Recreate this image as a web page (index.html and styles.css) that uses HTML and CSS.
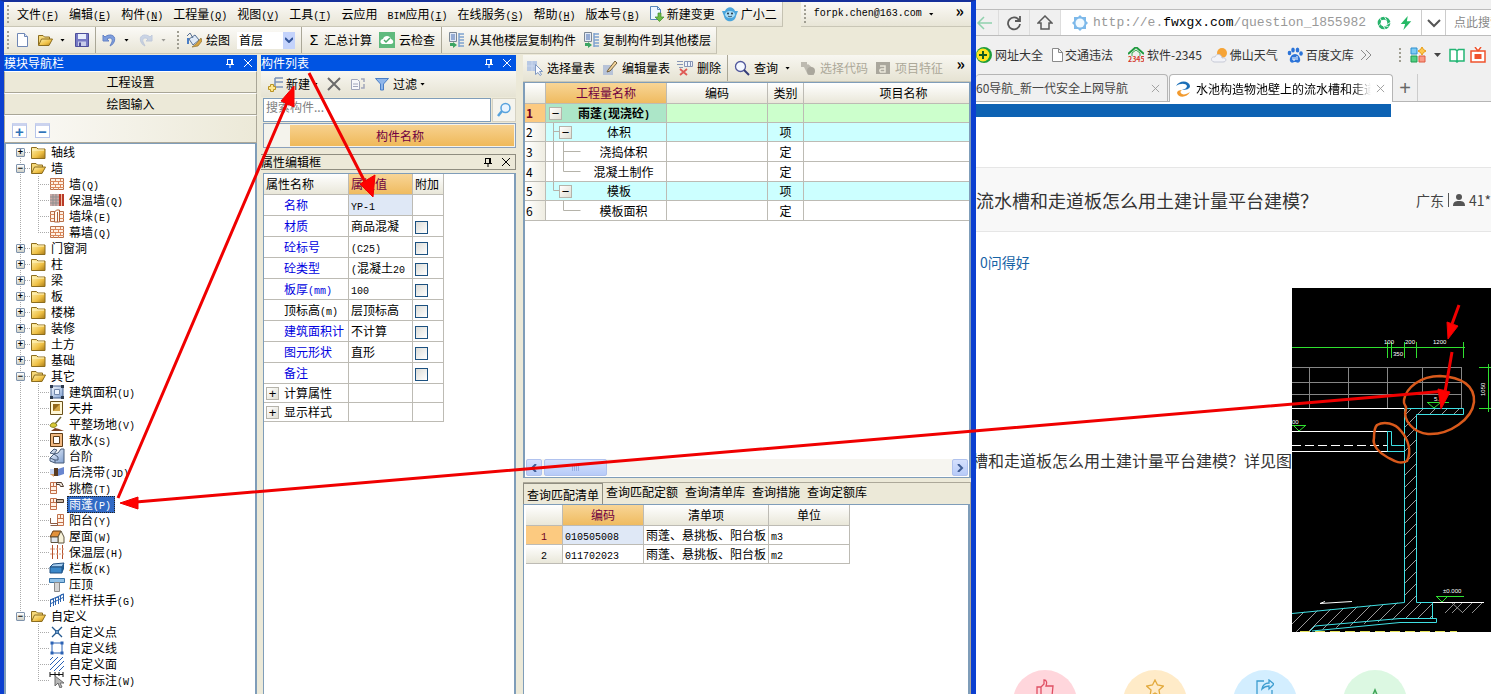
FILE: index.html
```html
<!DOCTYPE html>
<html lang="zh-CN">
<head>
<meta charset="utf-8">
<title>土建计量平台</title>
<link rel="stylesheet" href="styles.css">
</head>
<body>
<svg class="defs" aria-hidden="true">
  <defs>
    <linearGradient id="gold" x1="0" y1="0" x2="1" y2="1"><stop offset="0" stop-color="#fff3b0"/><stop offset=".6" stop-color="#efc044"/><stop offset="1" stop-color="#a87a18"/></linearGradient>
    <linearGradient id="steel" x1="0" y1="0" x2="1" y2="1"><stop offset="0" stop-color="#f4f9ff"/><stop offset="1" stop-color="#7f9fd0"/></linearGradient>
    <pattern id="hatch" width="12" height="12" patternUnits="userSpaceOnUse"><path d="M0 12L12 0" stroke="#9a9a9a" stroke-width="1"/></pattern>
    <pattern id="lattice" width="5" height="5" patternUnits="userSpaceOnUse"><path d="M0 5L5 0" stroke="#2b62b5" stroke-width="1"/></pattern>
  </defs>
  <symbol id="i-folder" viewBox="0 0 16 16"><path d="M1.500 3.500h5l1.500 1.500h7v9.500h-13.500z" fill="url(#gold)" stroke="#8c6d1f"/><path d="M2 6h12" stroke="#fff6c8"/></symbol>
  <symbol id="i-open" viewBox="0 0 16 16"><path d="M1.500 13V3.500h4.500l1.500 1.500h5v2" fill="#f6d97a" stroke="#8c6d1f"/><path d="M1.500 13.500l3-6.500h11l-3.500 6.500z" fill="url(#gold)" stroke="#8c6d1f"/></symbol>
  <symbol id="i-wall" viewBox="0 0 16 16"><path d="M1.500 2.500h13v11h-13z" fill="#fff1e4" stroke="#b8704a"/><path d="M1 5.500h14M1 8.500h14M1 11.500h14M6.500 3v2M11.500 3v2M4.500 6v2M9.500 6v2M6.500 9v2M11.500 9v2M4.500 12v2M9.500 12v2" stroke="#d9885c" fill="none"/></symbol>
  <symbol id="i-insul" viewBox="0 0 16 16"><path d="M1 2h9v12H1z" fill="#c9aaa8"/><path d="M1 5h9M1 8h9M1 11h9M4 2v12M7 2v12" stroke="#8f8f8f"/><path d="M10 2h5v12h-5z" fill="#b93a28"/><path d="M12.500 2v12" stroke="#f2c3a8"/></symbol>
  <symbol id="i-pier" viewBox="0 0 16 16"><path d="M1.500 3.500h13v10h-13z" fill="#fff1e4" stroke="#b8704a"/><path d="M1 6.500h14M1 10.500h14" stroke="#d9885c"/><path d="M5.500 14V4l2-2h3v12zM8.500 4v10" fill="#fffaf2" stroke="#b0623a"/></symbol>
  <symbol id="i-area" viewBox="0 0 16 16"><path d="M2 2h12v12H2z" fill="url(#steel)" stroke="#44618d"/><path d="M5.500 5.500h5v5h-5z" fill="#eef5ff" stroke="#7187aa"/><path d="M1 1h3v3H1zM12 1h3v3h-3zM1 12h3v3H1zM12 12h3v3h-3z" fill="#2d3a4d"/></symbol>
  <symbol id="i-court" viewBox="0 0 16 16"><path d="M1.500 1.500h12v13h-12z" fill="#fff7d6" stroke="#69501a"/><path d="M4 4h7v7H4z" fill="#94691b"/><path d="M4 11l7-7v7z" fill="#d2a646"/></symbol>
  <symbol id="i-level" viewBox="0 0 16 16"><path d="M12 1L6 8" stroke="#6f6a38" stroke-width="1.500"/><path d="M1 10c1-4 5-4 7-1-1 3-5 3-7 1z" fill="#d8c936" stroke="#89801d"/><path d="M2 15l4-3 4 1 5 2z" fill="#7a4020"/></symbol>
  <symbol id="i-apron" viewBox="0 0 16 16"><path d="M1.500 1.500h12v13h-12z" fill="#f0b881" stroke="#5f3d18"/><path d="M4.500 4.500h6v7h-6z" fill="#fff" stroke="#5f3d18"/></symbol>
  <symbol id="i-step" viewBox="0 0 16 16"><path d="M1 10l4-4 4-1 3-4h3v14H6l-5-2z" fill="url(#steel)" stroke="#465b78"/><path d="M1 10l5 2v3M5 6l4 3v3H6" stroke="#465b78" fill="none"/><path d="M1 5l4-4 3 1-3 4z" fill="#c6d3e5" stroke="#465b78"/></symbol>
  <symbol id="i-band" viewBox="0 0 16 16"><path d="M1 5h4v6H1z" fill="#c9d6f2"/><path d="M5 4h4v8H5z" fill="#583a20"/><path d="M9 5l6-2v7l-6 2z" fill="#6986cf"/><path d="M1 10h4v3z" fill="#d6a06b"/></symbol>
  <symbol id="i-eave" viewBox="0 0 16 16"><path d="M1.500 2.500h6v11h-6zM1 6.500h6M1 10.500h6M4.500 3v4" fill="#fff1e4" stroke="#c2714b"/><path d="M7.500 2.500h5l2 4h-3l-1-2h-3z" fill="#ece3d9" stroke="#4d3a2d"/></symbol>
  <symbol id="i-canopy" viewBox="0 0 16 16"><path d="M1.500 2.500h6v11h-6zM1 6.500h6M1 10.500h6M4.500 3v4" fill="#fff1e4" stroke="#c2714b"/><path d="M7.500 3.500h7v3h-7z" fill="#c9b7a5" stroke="#4d3a2d"/></symbol>
  <symbol id="i-balcony" viewBox="0 0 16 16"><path d="M8.500 2.500h6v11h-6zM8 6.500h6M8 10.500h6M11.500 3v4" fill="#fff1e4" stroke="#c2714b"/><path d="M1.500 6v5.500h7v2h-7" fill="none" stroke="#8e5c44"/></symbol>
  <symbol id="i-roof" viewBox="0 0 16 16"><path d="M4 3h8L9 9H1z" fill="#e2913a" stroke="#683c12"/><path d="M9 9l3-6 3 6v6H9z" fill="#f7f2da" stroke="#5e543f"/><path d="M2 9h7v5.500H2z" fill="#dfe6ee" stroke="#5e543f"/></symbol>
  <symbol id="i-layer" viewBox="0 0 16 16"><path d="M3.500 1v14M8.500 1v14M13.500 1v14" stroke="#b6522e"/><path d="M1 5h14M1 10h14" stroke="#d99b79" stroke-dasharray="2 1"/></symbol>
  <symbol id="i-slab" viewBox="0 0 16 16"><path d="M1 7l3-3 11-1-2 4z" fill="#a7cef0" stroke="#1e4e80"/><path d="M1 7h12v6H1z" fill="#3b88c9" stroke="#1e4e80"/><path d="M13 7l2-4v6l-2 4z" fill="#1d588e"/></symbol>
  <symbol id="i-coping" viewBox="0 0 16 16"><path d="M.500 2.500h15v4H.500z" fill="#8fc1e8" stroke="#3a75a8"/><path d="M5.500 6.500h5v9h-5z" fill="#d4d4d4" stroke="#8a8a8a"/></symbol>
  <symbol id="i-rail" viewBox="0 0 16 16"><path d="M1.500 15V8l3-1v7M6.500 13V6l3-1v7M11.500 10V3l3-1v7M1 12l14-7M1 8l14-6" fill="none" stroke="#2a63b0"/></symbol>
  <symbol id="i-point" viewBox="0 0 16 16"><path d="M3 3l4 4M13 3L9 7M3 13l4-4M13 13L9 9" fill="none" stroke="#24598f" stroke-width="1.300"/><circle cx="8" cy="8" r="1.500" fill="#8ab8e6" stroke="#24598f"/></symbol>
  <symbol id="i-line" viewBox="0 0 16 16"><path d="M3 3h10v10H3z" fill="#fff" stroke="#2b62b5"/><path d="M1.500 1.500h3v3h-3zM11.500 1.500h3v3h-3zM1.500 11.500h3v3h-3zM11.500 11.500h3v3h-3z" fill="#2b62b5"/></symbol>
  <symbol id="i-face" viewBox="0 0 16 16"><path d="M1 1h14v14H1z" fill="url(#lattice)"/></symbol>
  <symbol id="i-dim" viewBox="0 0 16 16"><path d="M1 0v5M14 0v5M1 2.500h13M6 0v4M10 0v4" stroke="#111" fill="none"/><path d="M6 4v10l3-3 2 5 2-1-2-4h4z" fill="#b8b8b8" stroke="#6c6c6c"/></symbol>
  <symbol id="i-new" viewBox="0 0 16 16"><path d="M2.500 1.500h7l3 3v10h-10z" fill="#fff" stroke="#6f87b5"/><path d="M9.500 1.500v3h3" fill="#dbe6f8" stroke="#6f87b5"/></symbol>
  <symbol id="i-save" viewBox="0 0 16 16"><path d="M1.500 1.500h13v13h-13z" fill="#7679c4" stroke="#4d4f9b"/><path d="M4 2h8v5H4z" fill="#e8eefb"/><path d="M4 9.500h8V14H4z" fill="#c9cdea"/><path d="M5 10.500h2V14H5z" fill="#4d4f9b"/></symbol>
  <symbol id="i-undo" viewBox="0 0 16 16"><path d="M2 3v6h6L6 7c3-2 6-1 5 3l-2 4c5-2 7-10 1-11-2 0-4 0-6 2z" fill="#7e9ede" stroke="#6482c4"/></symbol>
  <symbol id="i-paint" viewBox="0 0 16 16"><path d="M3 7l6-4 4 5-6 5z" fill="#dfeaf7" stroke="#566f93"/><path d="M1 4l3-3 3 5" fill="none" stroke="#566f93"/><path d="M2 6v6" stroke="#4b7fc6" stroke-width="2"/><path d="M15 6l-5 6-4 3 6-1 4-5z" fill="#d8a33e" stroke="#8f7437" stroke-width=".7"/></symbol>
  <symbol id="i-check" viewBox="0 0 16 16"><rect width="16" height="16" fill="#5fba7d"/><path d="M3 12c-3-2-1-5 1-5 1-4 7-4 8 0 3 1 3 5 0 5z" fill="#fff"/><path d="M5 8l2 2 4-4" fill="none" stroke="#4cab6b" stroke-width="1.500"/></symbol>
  <symbol id="i-copy" viewBox="0 0 16 16"><path d="M1.500 .500h7v9h-7z" fill="#e2eaf6" stroke="#7b8795"/><path d="M3 3h4M3 5h4M3 7h4" stroke="#4b6fb0"/><path d="M11 2h5M11 5h5M11 8h5M11 11h5M11 14h5M11 1v14" stroke="#7fa3d0" stroke-width="1.500"/><path d="M2 11v3h3v2l4-3-4-3v1z" fill="#3ba562"/></symbol>
  <symbol id="i-change" viewBox="0 0 16 16"><path d="M2.500 .500h7l3 3v10h-10z" fill="#edf6ff" stroke="#5887bb"/><path d="M9.500 .500v3h3" fill="none" stroke="#5887bb"/><path d="M10 7v4h-3l4.500 4.500L16 11h-3V7z" fill="#6cbb46" stroke="#3d8d2a" stroke-width=".7"/></symbol>
  <symbol id="i-mascot" viewBox="0 0 16 16"><path d="M0 5l3 0c2-5 8-5 10 0l3 0-2 5c-1 7-11 7-12 0z" fill="#4aa5dc"/><ellipse cx="8" cy="8.500" rx="5" ry="3.500" fill="#a8dcf5"/><circle cx="6" cy="7.500" r="1" fill="#234"/><circle cx="10" cy="7.500" r="1" fill="#234"/><path d="M6 10c1 1 3 1 4 0" fill="none" stroke="#234" stroke-width=".8"/></symbol>
  <symbol id="i-add" viewBox="0 0 16 16"><path d="M8 2h8M8 6h8M8 11h8M8 2v9" stroke="#7b93b8" stroke-width="1.500" fill="none"/><path d="M3.500 8.500h3v2h2v3h-2v2h-3v-2h-2v-3h2z" fill="#ffe78d" stroke="#b99224"/></symbol>
  <symbol id="i-del" viewBox="0 0 16 16"><path d="M2 2l12 12M14 2L2 14" stroke="#6b6b6b" stroke-width="2"/></symbol>
  <symbol id="i-dup" viewBox="0 0 16 16"><path d="M1.500 3.500h6l2 2v8h-8zM3 8h5M3 10.500h5" fill="#f8f8fb" stroke="#a1a6bb"/><path d="M11 3h3v3M14 8v4h-3" fill="none" stroke="#a1a6bb" stroke-width="1.500"/></symbol>
  <symbol id="i-funnel" viewBox="0 0 16 16"><path d="M1.500 2.500h13l-5 5.500v6h-3V8z" fill="#8fb6ea" stroke="#4a7fc6"/></symbol>
  <symbol id="i-glass" viewBox="0 0 16 16"><circle cx="6.500" cy="6.500" r="5" fill="#f4f8ff" stroke="#51589c" stroke-width="1.300"/><path d="M10 10l5 5" stroke="#333b78" stroke-width="2"/></symbol>
  <symbol id="i-find" viewBox="0 0 16 16"><circle cx="9.500" cy="6" r="4.500" fill="#e9f4ff" stroke="#57a2dd" stroke-width="1.500"/><path d="M6 9l-4 5" stroke="#57a2dd" stroke-width="2.500"/></symbol>
  <symbol id="i-pick" viewBox="0 0 16 16"><path d="M0 1h10v10H0z" fill="#b7c8e4"/><path d="M0 6h10M5 1v10" stroke="#cbd8ee"/><path d="M8.500 4.500v10l2.500-2 2 3 1.500-1-2-3h3z" fill="#f9fbff" stroke="#7f98c2"/></symbol>
  <symbol id="i-edit" viewBox="0 0 16 16"><path d="M1 5h10v10H1z" fill="#b7c3d8"/><path d="M6 10l7-9 2 2-7 8-3 1z" fill="#f3d49a" stroke="#72603e"/></symbol>
  <symbol id="i-rowdel" viewBox="0 0 16 16"><path d="M0 1.500h6M0 4.500h6M2 7.500h4" stroke="#8795b5"/><path d="M7.500 1.500h8v5h-8zM10.500 2v5M13.500 2v5" fill="#eef3fb" stroke="#8795b5"/><path d="M3 9l7 6M10 9l-7 6" stroke="#df5a55" stroke-width="1.800"/></symbol>
  <symbol id="i-code" viewBox="0 0 16 16"><path d="M1 2h6v5H1zM4 7l4-3 6 5v6H8z" fill="#bdbab0"/><circle cx="11" cy="11" r="4" fill="#aaa79d"/></symbol>
  <symbol id="i-feature" viewBox="0 0 16 16"><path d="M1 2h14v12H1z" fill="#aaa79d"/><path d="M5 6h5v6H5.500c-1-1-1-3 1-3H10" fill="none" stroke="#ece9dc" stroke-width="1.500"/></symbol>
  <symbol id="i-pin" viewBox="0 0 10 10"><path d="M2.500 1v5M7.500 1v5M2.500 1.500h5M6.500 1v5M1 6.500h8M5 7v3" fill="none" stroke="currentColor"/></symbol>
  <symbol id="i-x" viewBox="0 0 10 10"><path d="M1 1l8 8M9 1L1 9" stroke="currentColor" fill="none"/></symbol>
</svg>

<div class="desktop">
<main class="app">
  <div class="bar menubar">
    <nav class="strip">
      <i class="grip"></i>
      <button>文件<span class="k">(<u>F</u>)</span></button>
      <button>编辑<span class="k">(<u>E</u>)</span></button>
      <button>构件<span class="k">(<u>N</u>)</span></button>
      <button>工程量<span class="k">(<u>Q</u>)</span></button>
      <button>视图<span class="k">(<u>V</u>)</span></button>
      <button>工具<span class="k">(<u>T</u>)</span></button>
      <button>云应用</button>
      <button><span class="k">BIM</span>应用<span class="k">(<u>I</u>)</span></button>
      <button>在线服务<span class="k">(<u>S</u>)</span></button>
      <button>帮助<span class="k">(<u>H</u>)</span></button>
      <button>版本号<span class="k">(<u>B</u>)</span></button>
      <span class="extras">
        <button class="tool"><svg><use href="#i-change"/></svg>新建变更</button>
        <button class="tool"><svg><use href="#i-mascot"/></svg>广小二</button>
      </span>
    </nav>
    <div class="strip account">
      <i class="grip"></i>
      <button class="tool"><span class="k">forpk.chen@163.com</span><i class="caret"></i></button>
      <button class="more">»</button>
    </div>
  </div>
  <div class="bar toolbar">
    <div class="strip">
      <i class="grip"></i>
      <button class="tool" aria-label="新建"><svg><use href="#i-new"/></svg></button>
      <button class="tool" aria-label="打开"><svg><use href="#i-open"/></svg><i class="caret"></i></button>
      <button class="tool" aria-label="保存"><svg><use href="#i-save"/></svg></button>
      <i class="sep"></i>
      <button class="tool" aria-label="撤销"><svg><use href="#i-undo"/></svg><i class="caret"></i></button>
      <button class="tool faded" aria-label="重做"><svg class="flip"><use href="#i-undo"/></svg><i class="caret"></i></button>
    </div>
    <div class="strip actions">
      <i class="grip"></i>
      <button class="tool"><svg><use href="#i-paint"/></svg>绘图</button>
      <select aria-label="楼层"><option>首层</option></select>
      <i class="sep"></i>
      <button class="tool"><b class="sigma">Σ</b>汇总计算</button>
      <button class="tool"><svg><use href="#i-check"/></svg>云检查</button>
      <i class="sep"></i>
      <button class="tool"><svg><use href="#i-copy"/></svg>从其他楼层复制构件</button>
      <button class="tool"><svg><use href="#i-copy"/></svg>复制构件到其他楼层</button>
    </div>
  </div>

  <div class="panels">
    <section class="nav-panel">
      <h2 class="title">模块导航栏<svg><use href="#i-pin"/></svg><svg><use href="#i-x"/></svg></h2>
      <button class="wide">工程设置</button>
      <button class="wide">绘图输入</button>
      <div class="fold"><button aria-label="展开">+</button><button aria-label="折叠">−</button></div>
      <div class="treebox">
        <ul class="tree">
          <li><p><button class="ex">+</button><i class="dots"></i><svg><use href="#i-folder"/></svg><span>轴线</span></p></li>
          <li><p><button class="ex">−</button><i class="dots"></i><svg><use href="#i-open"/></svg><span>墙</span></p>
            <ul>
              <li><svg><use href="#i-wall"/></svg><span>墙<span class="k">(Q)</span></span></li>
              <li><svg><use href="#i-insul"/></svg><span>保温墙<span class="k">(Q)</span></span></li>
              <li><svg><use href="#i-pier"/></svg><span>墙垛<span class="k">(E)</span></span></li>
              <li><svg><use href="#i-wall"/></svg><span>幕墙<span class="k">(Q)</span></span></li>
            </ul></li>
          <li><p><button class="ex">+</button><i class="dots"></i><svg><use href="#i-folder"/></svg><span>门窗洞</span></p></li>
          <li><p><button class="ex">+</button><i class="dots"></i><svg><use href="#i-folder"/></svg><span>柱</span></p></li>
          <li><p><button class="ex">+</button><i class="dots"></i><svg><use href="#i-folder"/></svg><span>梁</span></p></li>
          <li><p><button class="ex">+</button><i class="dots"></i><svg><use href="#i-folder"/></svg><span>板</span></p></li>
          <li><p><button class="ex">+</button><i class="dots"></i><svg><use href="#i-folder"/></svg><span>楼梯</span></p></li>
          <li><p><button class="ex">+</button><i class="dots"></i><svg><use href="#i-folder"/></svg><span>装修</span></p></li>
          <li><p><button class="ex">+</button><i class="dots"></i><svg><use href="#i-folder"/></svg><span>土方</span></p></li>
          <li><p><button class="ex">+</button><i class="dots"></i><svg><use href="#i-folder"/></svg><span>基础</span></p></li>
          <li><p><button class="ex">−</button><i class="dots"></i><svg><use href="#i-open"/></svg><span>其它</span></p>
            <ul>
              <li><svg><use href="#i-area"/></svg><span>建筑面积<span class="k">(U)</span></span></li>
              <li><svg><use href="#i-court"/></svg><span>天井</span></li>
              <li><svg><use href="#i-level"/></svg><span>平整场地<span class="k">(V)</span></span></li>
              <li><svg><use href="#i-apron"/></svg><span>散水<span class="k">(S)</span></span></li>
              <li><svg><use href="#i-step"/></svg><span>台阶</span></li>
              <li><svg><use href="#i-band"/></svg><span>后浇带<span class="k">(JD)</span></span></li>
              <li><svg><use href="#i-eave"/></svg><span>挑檐<span class="k">(T)</span></span></li>
              <li><svg><use href="#i-canopy"/></svg><span class="selected">雨蓬<span class="k">(P)</span></span></li>
              <li><svg><use href="#i-balcony"/></svg><span>阳台<span class="k">(Y)</span></span></li>
              <li><svg><use href="#i-roof"/></svg><span>屋面<span class="k">(W)</span></span></li>
              <li><svg><use href="#i-layer"/></svg><span>保温层<span class="k">(H)</span></span></li>
              <li><svg><use href="#i-slab"/></svg><span>栏板<span class="k">(K)</span></span></li>
              <li><svg><use href="#i-coping"/></svg><span>压顶</span></li>
              <li><svg><use href="#i-rail"/></svg><span>栏杆扶手<span class="k">(G)</span></span></li>
            </ul></li>
          <li><p><button class="ex">−</button><i class="dots"></i><svg><use href="#i-open"/></svg><span>自定义</span></p>
            <ul>
              <li><svg><use href="#i-point"/></svg><span>自定义点</span></li>
              <li><svg><use href="#i-line"/></svg><span>自定义线</span></li>
              <li><svg><use href="#i-face"/></svg><span>自定义面</span></li>
              <li><svg><use href="#i-dim"/></svg><span>尺寸标注<span class="k">(W)</span></span></li>
            </ul></li>
        </ul>
      </div>
    </section>

    <section class="part-panel">
      <h2 class="title">构件列表<svg><use href="#i-pin"/></svg><svg><use href="#i-x"/></svg></h2>
      <div class="parttools">
        <button class="tool"><svg><use href="#i-add"/></svg>新建<i class="caret"></i></button>
        <button class="tool" aria-label="删除构件"><svg><use href="#i-del"/></svg></button>
        <button class="tool" aria-label="复制"><svg><use href="#i-dup"/></svg></button>
        <button class="tool"><svg><use href="#i-funnel"/></svg>过滤<i class="caret"></i></button>
      </div>
      <div class="search"><input type="text" placeholder="搜索构件..." aria-label="搜索构件"><button aria-label="搜索"><svg><use href="#i-find"/></svg></button></div>
      <div class="partname"><span>构件名称</span></div>
      <h2 class="title plain">属性编辑框<svg><use href="#i-pin"/></svg><svg><use href="#i-x"/></svg></h2>
      <div class="propbox">
        <table class="props">
          <colgroup><col class="w85"><col class="w64"><col class="w31"></colgroup>
          <thead><tr><th>属性名称</th><th class="hot">属性值</th><th>附加</th></tr></thead>
          <tbody>
            <tr><td>名称</td><td class="cur"><span class="k">YP-1</span></td><td></td></tr>
            <tr><td>材质</td><td>商品混凝</td><td><input type="checkbox" aria-label="材质"></td></tr>
            <tr><td>砼标号</td><td><span class="k">(C25)</span></td><td><input type="checkbox" aria-label="砼标号"></td></tr>
            <tr><td>砼类型</td><td><span class="k">(</span>混凝土<span class="k">20</span></td><td><input type="checkbox" aria-label="砼类型"></td></tr>
            <tr><td>板厚<span class="k">(mm)</span></td><td><span class="k">100</span></td><td><input type="checkbox" aria-label="板厚"></td></tr>
            <tr class="private"><td>顶标高<span class="k">(m)</span></td><td>层顶标高</td><td><input type="checkbox" aria-label="顶标高"></td></tr>
            <tr><td>建筑面积计</td><td>不计算</td><td><input type="checkbox" aria-label="建筑面积计"></td></tr>
            <tr><td>图元形状</td><td>直形</td><td><input type="checkbox" aria-label="图元形状"></td></tr>
            <tr><td>备注</td><td></td><td><input type="checkbox" aria-label="备注"></td></tr>
            <tr class="more-props"><td><button class="box">+</button>计算属性</td><td></td><td></td></tr>
            <tr class="more-props"><td><button class="box">+</button>显示样式</td><td></td><td></td></tr>
          </tbody>
        </table>
      </div>
    </section>

    <section class="work-panel">
      <div class="worktools">
        <button class="tool"><svg><use href="#i-pick"/></svg>选择量表</button>
        <button class="tool"><svg><use href="#i-edit"/></svg>编辑量表</button>
        <button class="tool"><svg><use href="#i-rowdel"/></svg>删除</button>
        <i class="sep"></i>
        <button class="tool"><svg><use href="#i-glass"/></svg>查询<i class="caret"></i></button>
        <button class="tool" disabled><svg><use href="#i-code"/></svg>选择代码</button>
        <button class="tool" disabled><svg><use href="#i-feature"/></svg>项目特征</button>
        <button class="more">»</button>
      </div>
      <div class="gridbox">
        <div class="scroller">
          <table class="grid">
            <colgroup><col class="w21"><col class="w121"><col class="w101"><col class="w36"><col class="w200"></colgroup>
            <thead><tr><th></th><th class="hot">工程量名称</th><th>编码</th><th>类别</th><th>项目名称</th></tr></thead>
            <tbody>
              <tr class="top"><th>1</th><td><div class="cell"><button class="box">−</button><b>雨蓬<span class="k">(</span>现浇砼<span class="k">)</span></b></div></td><td></td><td></td><td></td></tr>
              <tr class="group"><th>2</th><td><div class="cell"><svg class="twig"><path d="M4.500 0v20M4.500 9.500h6"/></svg><button class="box">−</button><span>体积</span></div></td><td></td><td>项</td><td></td></tr>
              <tr class="leaf"><th>3</th><td><div class="cell"><svg class="twig long"><path d="M4.500 0v20M14.500 0v20M14.500 9.500h17"/></svg><span>浇捣体积</span></div></td><td></td><td>定</td><td></td></tr>
              <tr class="leaf"><th>4</th><td><div class="cell"><svg class="twig long"><path d="M4.500 0v20M14.500 0v9.500h17"/></svg><span>混凝土制作</span></div></td><td></td><td>定</td><td></td></tr>
              <tr class="group"><th>5</th><td><div class="cell"><svg class="twig"><path d="M4.500 0v9.500h6"/></svg><button class="box">−</button><span>模板</span></div></td><td></td><td>项</td><td></td></tr>
              <tr class="leaf"><th>6</th><td><div class="cell"><svg class="twig long"><path d="M14.500 0v9.500h17"/></svg><span>模板面积</span></div></td><td></td><td>定</td><td></td></tr>
            </tbody>
          </table>
        </div>
        <div class="hbar"><button aria-label="向左"><svg viewBox="0 0 8 8"><path d="M6 0L2 4l4 4"/></svg></button><i class="thumb"></i><button aria-label="向右"><svg viewBox="0 0 8 8"><path d="M2 0l4 4-4 4"/></svg></button></div>
      </div>
      <div class="querybox">
        <div class="tabs"><button class="on">查询匹配清单</button><button>查询匹配定额</button><button>查询清单库</button><button>查询措施</button><button>查询定额库</button></div>
        <div class="results">
          <table class="list">
            <colgroup><col class="w37"><col class="w81"><col class="w125"><col class="w81"></colgroup>
            <thead><tr><th></th><th class="hot">编码</th><th>清单项</th><th>单位</th></tr></thead>
            <tbody>
              <tr><th class="on"><span class="k">1</span></th><td class="cur"><span class="k">010505008</span></td><td>雨蓬、悬挑板、阳台板</td><td><span class="k">m3</span></td></tr>
              <tr><th><span class="k">2</span></th><td><span class="k">011702023</span></td><td>雨蓬、悬挑板、阳台板</td><td><span class="k">m2</span></td></tr>
            </tbody>
          </table>
        </div>
      </div>
    </section>
  </div>
</main>

<section class="browser">
  <div class="address">
    <button aria-label="后退"><svg viewBox="0 0 16 16"><path d="M16 8H2M8 2L2 8l6 6" fill="none" stroke="#8fd1ad" stroke-width="1.500"/></svg></button>
    <button aria-label="刷新"><svg viewBox="0 0 16 16"><path d="M13 5A6 6 0 1 0 14 9M14 1v5H9" fill="none" stroke="#5a5a5a" stroke-width="1.800"/></svg></button>
    <button aria-label="主页"><svg viewBox="0 0 16 16"><path d="M1 8l7-7 7 7h-3v6H4V8z" fill="none" stroke="#5a5a5a" stroke-width="1.500"/></svg></button>
    <div class="url">
      <svg viewBox="0 0 16 16"><path d="M8 0l2 2 4 0 0 4 2 2-2 2 0 4-4 0-2 2-2-2-4 0 0-4-2-2 2-2 0-4 4 0z" fill="#7db9ea"/><circle cx="8" cy="8" r="4.500" fill="#f2faff"/></svg>
      <span>http://e.<b>fwxgx.com</b>/question_1855982</span>
      <svg viewBox="0 0 16 16" class="s14"><circle cx="8" cy="8" r="5.500" fill="none" stroke="#27b36b" stroke-width="3.500"/><path d="M8 0l3 5M16 7l-5 3M10 16l-3-5M1 12l4-4M3 2l3 5M13 12l-6-1" stroke="#fff" stroke-width="1"/></svg>
      <svg viewBox="0 0 16 16" class="s14"><path d="M10 0L2 9h5l-2 7 9-10H9z" fill="#25b965"/></svg>
    </div>
    <button class="drop" aria-label="展开"><svg viewBox="0 0 16 16"><path d="M2 5l6 6 6-6" fill="none" stroke="#555" stroke-width="2"/></svg></button>
    <span class="hint">点此搜索</span>
  </div>
  <div class="marks">
    <a href="#"><svg viewBox="0 0 16 16"><circle cx="8" cy="8" r="8" fill="#1d9c3a"/><circle cx="7" cy="8" r="6.500" fill="#ffe51f"/><path d="M7 4v8M3 8h8" stroke="#145c22" stroke-width="2"/></svg>网址大全</a>
    <a href="#" class="doc"><svg viewBox="0 0 16 16"><path d="M3.500 1.500h6l4 4v9h-10zM9.500 1.500v4h4" fill="#fff" stroke="#8a8a8a"/></svg>交通违法</a>
    <a href="#"><svg viewBox="0 0 16 16"><path d="M0 7l8-7 8 7" fill="none" stroke="#209a3f" stroke-width="2"/><path d="M4 9V6l4-3 4 3v3" fill="none" stroke="#36a852"/><text x="0" y="15" font-size="7" font-weight="bold" fill="#d3392f">2345</text></svg>软件-2345</a>
    <a href="#"><svg viewBox="0 0 16 16"><circle cx="11" cy="6" r="5" fill="#f6a436"/><path d="M3 15c-4-1-3-6 1-5 1-4 7-3 7 1 5-1 5 4 1 4z" fill="#f2f3f8" stroke="#c6c9d6"/></svg>佛山天气</a>
    <a href="#"><svg viewBox="0 0 16 16"><path d="M8 7c3 0 6 4 5 7-1 3-4 1-5 1s-4 2-5-1c-1-3 2-7 5-7z" fill="#2c74d8"/><ellipse cx="2.500" cy="6" rx="1.800" ry="2.200" fill="#2c74d8"/><ellipse cx="6" cy="3" rx="1.800" ry="2.500" fill="#2c74d8"/><ellipse cx="10.500" cy="3" rx="1.800" ry="2.500" fill="#2c74d8"/><ellipse cx="14" cy="6.500" rx="1.800" ry="2.200" fill="#2c74d8"/><path d="M6 10v3h2v-3M10 9v4" stroke="#fff" fill="none"/></svg>百度文库</a>
    <button class="chev" aria-label="更多书签"><svg viewBox="0 0 12 12"><path d="M1 1l5 5-5 5M6 1l5 5-5 5" fill="none" stroke="#8a8a8a"/></svg></button>
    <div class="plugins"><i class="grip"></i>
      <svg viewBox="0 0 16 16"><path d="M1 1h6v6H1z" fill="#7ccaf5" stroke="#2c8fcf"/><path d="M1 9h6v6H1z" fill="#52cf83" stroke="#1f9c50"/><path d="M9 9h6v6H9z" fill="#fb9a85" stroke="#dd5a40"/><path d="M12 0l1.500 2.500L16 4l-2.500 1.500L12 8l-1.500-2.500L8 4l2.500-1.500z" fill="#ffc64b" stroke="#e79b13"/></svg>
      <i class="caret"></i>
      <svg viewBox="0 0 16 16"><path d="M1 2.500h5.500L8 4l1.500-1.500H15V14H9.500L8 15l-1.500-1H1zM8 4v11" fill="#fff" stroke="#22b573" stroke-width="1.500"/></svg>
      <svg viewBox="0 0 16 16"><path d="M1 4h14v11H1zM5 0l3 4 3-4" fill="#fff" stroke="#f0532d" stroke-width="1.500"/><path d="M4.500 7h7v5h-7z" fill="#f0532d"/></svg>
    </div>
  </div>
  <div class="pagetabs">
    <div class="ptab first"><span>60导航_新一代安全上网导航</span><svg><use href="#i-x"/></svg></div>
    <div class="ptab active"><svg class="s16" viewBox="0 0 16 16"><path d="M1 5C4-1 14-1 15 5c0 3-4 4-8 4 3-1 5-2 5-4-1-3-7-3-11 0z" fill="#1b6fb8"/><path d="M15 11c-3 6-12 6-13 1 0-2 2-3 5-3-2 1-2 3 0 4 2 1 5 0 8-2z" fill="#f29a2e"/></svg><span>水池构造物池壁上的流水槽和走道</span><svg><use href="#i-x"/></svg></div>
    <button class="plus" aria-label="新标签页">+</button>
  </div>
  <div class="page">
    <div class="band"></div>
    <header class="question"><h1>流水槽和走道板怎么用土建计量平台建模？</h1><p>广东<i></i><svg viewBox="0 0 12 12"><circle cx="6" cy="3" r="3" fill="#555"/><path d="M0 12c0-4 2-5 6-5s6 1 6 5z" fill="#555"/></svg>41*</p></header>
    <a class="good" href="#">0问得好</a>
    <div class="detail">
      <p>槽和走道板怎么用土建计量平台建模？详见图</p>
      <svg class="drawing" viewBox="0 0 199 344" role="img" aria-label="剖面图">
        <rect width="199" height="344"/>
        <g class="crisp" fill="none" stroke-width="1">
          <path d="M0 79.500h170M0 94.500h170M0 106.500h170M17.500 79v41M56.500 79v41M95.500 79v41M130.500 79v41M169.500 79v41" stroke="#868686"/>
          <path d="M0 59.500h173M95.500 54v16M99.500 54v16M112.500 54v16M124.500 54v16M171.500 54v16M187 79.500h12M196.500 76v48M187 120.500h12" stroke="#2fe02f"/>
          <path d="M0 120.500h112M0 143.500h95M0 163.500h112M140 314.500h52" stroke="#fff"/>
          <path d="M0 157.500h95" stroke="#fff" stroke-dasharray="9 4"/>
          <path d="M8 343.500h157" stroke="#e5e35a" stroke-dasharray="10 5"/>
        </g>
        <g fill="none" stroke-width="1">
          <path d="M28 315.500l5-2M28 315.500l32-2" stroke="#fff"/>
          <path d="M112 120h59v6h-47v188h16v17h-32L20 343 0 344V325l112-11z" fill="url(#hatch)"/>
          <path d="M0 325.500l112.500-11V120.500h59v6h-47v188h16v16M18 343l5-5 85-7.500h36.500v4H108L20 343M95.500 143v20M95.500 143.500h4v14h13M95.500 163.500h17" stroke="#3fe0e4"/>
          <path d="M135 114.500h22M136 115l6 5 6-5M0 137.500h14M2 138l5 5 6-5M144 308.500h28M145 309l5 5 5-5" stroke="#2fe02f"/>
          <path d="M153 325l10-10M160 325l10-10M170 325l10-10M180 325l10-10M160 315l10 9" stroke="#8f8f8f"/>
          <path d="M112 112c2-12 16-24 36-24 22 1 35 10 34 26-2 17-24 33-46 32-14-1-26-14-22-25 1-4-3-3-2-9z" stroke="#d8591b" stroke-width="2.500"/>
          <path d="M85 137c7-4 18-2 24 6 7 8 11 20 6 30-8 4-14-1-20-4-8-4-15-12-13-19 0-6 1-11 3-13z" stroke="#d8591b" stroke-width="2.500"/>
        </g>
        <g class="dims"><text x="92" y="56">100</text><text x="113" y="56">200</text><text x="141" y="56">1200</text><text x="101" y="68">350</text><text x="142" y="113">5.1</text><text x="151" y="305">±0.000</text><text x="0" y="136">00</text><text transform="translate(193 108) rotate(-90)">1050</text></g>
      </svg>
    </div>
    <div class="share">
      <button class="c-red" aria-label="点赞"><svg viewBox="0 0 18 18"><path d="M1 8h4v9H1zM5 8l3-3V1c3 0 3 3 2 6h7l-1 10H5" fill="none" stroke="#e04f63" stroke-width="1.300"/></svg></button>
      <button class="c-gold" aria-label="收藏"><svg viewBox="0 0 18 18"><path d="M9 1l2.500 5 6 1-4.500 4 1 6-5-3-5 3 1-6L.500 7l6-1z" fill="none" stroke="#e2a93c" stroke-width="1.300"/></svg></button>
      <button class="c-blue" aria-label="分享"><svg viewBox="0 0 18 18"><path d="M8 2H1v15h15v-6M6 10c1-5 4-6 7-6V1l5 4-5 5V7c-3 0-5 1-7 3z" fill="none" stroke="#3d9dd0" stroke-width="1.300"/></svg></button>
      <button class="c-green" aria-label="置顶"><svg viewBox="0 0 18 18"><path d="M6 18l3-7 3 7" fill="none" stroke="#3fa557" stroke-width="1.500"/></svg></button>
    </div>
  </div>
</section>

<svg class="marker" viewBox="0 0 1491 694" preserveAspectRatio="none" aria-hidden="true">
  <path d="M118 498L289 98M309 73L367 186M1446 391L136 502M1459 305L1452 324M1452 352L1445 392"/>
  <path class="head" d="M294 86L281 101l13 6zM373 197l-13-13 15-9zM120 503l18-6v12zM1448 339l-1-17 11 4zM1441 409l-3-20 12 3z"/>
</svg>
</div>
</body>
</html>
```

FILE: styles.css
```css
* { box-sizing: border-box; }
html, body { height: 100%; }
body, h1, h2, p, ul { margin: 0; padding: 0; }
ul { list-style: none; }
body {
  overflow: hidden;
  font: 12px/16px "Noto Sans CJK SC", sans-serif;
  color: #000;
}
button {
  padding: 0;
  border: 0;
  background: none;
  color: inherit;
  font: inherit;
  white-space: nowrap;
}
svg { flex: none; width: 16px; height: 16px; }
.defs { position: absolute; width: 0; height: 0; }
.k { font: 10px/12px "Liberation Mono", monospace; }
.desktop {
  position: relative;
  display: grid;
  grid-template-columns: 976fr 515fr;
  height: 100vh;
}

/* Application window */
.app {
  display: flex;
  flex-direction: column;
  min-width: 0;
  min-height: 0;
  overflow: hidden;
  border: solid #0b3fd0;
  border-width: 2px 5px 0 4px;
  border-top-color: #16309a;
  background: #ece9d8;
}
.bar { display: flex; flex: none; }
.menubar { height: 25px; }
.toolbar { height: 27px; }
.strip {
  display: flex;
  align-items: center;
  gap: 10px;
  padding: 0 5px 0 3px;
  border-right: 1px solid #c5c2b2;
  border-bottom: 1px solid #c9c6b6;
  background: linear-gradient(#fbfaf7, #e8e5d6);
}
.extras { display: flex; gap: 7px; margin-left: -2px; }
.menubar .extras .tool { gap: 3px; }
.account { flex: 1; margin-left: 18px; border-right: 0; }
.grip {
  width: 2px;
  height: 18px;
  margin-right: -2px;
  background: repeating-linear-gradient(#a09e92 0 2px, transparent 2px 4px);
}
.tool { display: flex; align-items: center; gap: 4px; }
.tool:disabled { color: #aca899; }
.faded { opacity: .35; }
.flip { transform: scaleX(-1); }
.caret {
  width: 5px;
  height: 3px;
  margin: 0 3px;
  background: currentColor;
  clip-path: polygon(0 0, 100% 0, 50% 100%);
}
.more { align-self: flex-start; margin-left: auto; padding: 0 2px; font-size: 16px; line-height: 16px; font-weight: bold; }
.sep { width: 1px; align-self: stretch; background: #aaa797; }
.toolbar .strip { gap: 6px; }
.toolbar .strip:first-child { border-right: 0; }
.toolbar .sep { margin: 0 -1px; }
.toolbar .actions { gap: 7px; }
.toolbar .grip { margin-right: 0; }
.sigma { width: 12px; font: 14px/16px "Liberation Sans", sans-serif; }
select {
  appearance: none;
  width: 58px;
  height: 17px;
  padding: 0 0 0 2px;
  border: 0;
  border-radius: 0;
  background:
    url("data:image/svg+xml,%3Csvg xmlns='http://www.w3.org/2000/svg' width='8' height='6'%3E%3Cpath d='M0 1l4 4 4-4' fill='none' stroke='%2333569b' stroke-width='2'/%3E%3C/svg%3E") right 2px center no-repeat,
    linear-gradient(#c4d3fb, #c4d3fb) right / 12px 100% no-repeat, #fff;
  font: inherit;
}
.panels { display: flex; flex: 1; min-height: 0; margin-top: 1px; }
.title {
  display: flex;
  align-items: center;
  flex: none;
  gap: 8px;
  height: 16px;
  padding-right: 4px;
  background: #0054e3;
  color: #fff;
  font: inherit;
}
.title svg { width: 10px; height: 10px; }
.title svg:first-of-type { margin-left: auto; }
.title.plain {
  margin-top: 6px;
  border: 1px solid #8f8d80;
  border-left: 0;
  background: none;
  color: #000;
}
.nav-panel {
  display: flex;
  flex-direction: column;
  flex: 0 0 253px;
  min-height: 0;
}
.wide { height: 22px; flex: none; border: 1px solid #a9a697; border-top-color: #fff; }
.fold {
  display: flex;
  gap: 8px;
  flex: none;
  height: 28px;
  padding: 7px;
  border: 1px solid #aca899;
  border-top-color: #fff;
  background: linear-gradient(90deg, #fbfaf7, #ece9d8);
}
.fold button {
  width: 15px;
  height: 15px;
  border: 1px solid #b7c5ea;
  border-top: 3px solid #cbd3ee;
  background: #fff;
  color: #2f74b8;
  font: bold 15px/10px "Liberation Sans", sans-serif;
}
.treebox {
  flex: 1;
  min-height: 0;
  overflow: hidden;
  padding: 0 0 0 9px;
  border: solid #7f9db9;
  border-width: 1px 2px 0;
  background: #fff;
}
.tree { background: repeating-linear-gradient(#aaa 0 1px, transparent 1px 2px) 5px 8px / 1px calc(100% - 80px) no-repeat; }
.tree p, .tree ul li { display: flex; align-items: center; height: 16px; }
.tree ul { background: repeating-linear-gradient(#aaa 0 1px, transparent 1px 2px) 23px 0 / 1px calc(100% - 8px) no-repeat; }
.tree ul li { padding-left: 34px; gap: 2px; background: repeating-linear-gradient(90deg, #aaa 0 1px, transparent 1px 2px) 23px 8px / 11px 1px no-repeat; }
.tree ul li > span { padding: 0 2px; }
.tree .selected { background: #316ac5; color: #fff; outline: 1px dotted #222; outline-offset: -1px; padding-right: 4px; }
.tree p > span { margin-left: 5px; }
.ex {
  width: 9px;
  height: 9px;
  margin-left: 1px;
  border: 1px solid #7f93ac;
  border-radius: 1px;
  background: linear-gradient(#fff, #cfd0c6);
  font: bold 9px/7px "Liberation Sans", sans-serif;
}
.dots { width: 5px; border-top: 1px dotted #aaa; }

.part-panel {
  display: flex;
  flex-direction: column;
  flex: 0 0 255px;
  min-height: 0;
  margin: 0 7px 0 4px;
}
.parttools {
  display: flex;
  align-items: center;
  gap: 8px;
  flex: none;
  height: 26px;
  padding: 0 6px;
  background: linear-gradient(#f8f7f1, #e6e3d3);
}
.parttools .tool { gap: 3px; }
.parttools .caret { margin: 0; }
.search { display: flex; flex: none; height: 26px; padding: 1px 0 1px 2px; gap: 1px; }
.search input {
  flex: 1;
  min-width: 0;
  padding: 0 2px 6px;
  border: 1px solid #7f9db9;
  font: inherit;
}
.search input::placeholder { color: #808080; opacity: 1; }
.search button { width: 24px; border: 1px solid #d5d2c3; background: #f5f4ee; }
.search svg { display: block; margin: auto; }
.partname {
  flex: none;
  height: 25px;
  margin-left: 2px;
  padding: 1px 1px 1px 26px;
  border: 1px solid #8aa0bb;
  background: #f4f3ec;
}
.partname span {
  display: block;
  height: 100%;
  padding-right: 4px;
  background: linear-gradient(#f7d18e, #efb95a);
  color: #700040;
  line-height: 21px;
  text-align: center;
}
.propbox {
  flex: 1;
  min-height: 0;
  margin: 3px 0 0 2px;
  border: solid #7f9db9;
  border-width: 1px 2px 0 1px;
  background: #fff;
}
table { border-collapse: separate; border-spacing: 0; table-layout: fixed; }
th, td { padding: 0; border: solid #bdbbb4; border-width: 0 1px 1px 0; font-weight: normal; overflow: hidden; white-space: nowrap; line-height: 16px; }
thead th { background: linear-gradient(#fff, #e9e7d9); }
thead .hot { background: linear-gradient(#f8d596, #efbb60); color: #700040; }
.cur { background: #dfe8f6; }
.w21 { width: 21px; } .w31 { width: 31px; } .w36 { width: 36px; } .w37 { width: 37px; }
.w64 { width: 64px; } .w81 { width: 81px; } .w85 { width: 85px; } .w101 { width: 101px; }
.w121 { width: 121px; } .w125 { width: 125px; } .w200 { width: 200px; }
.props { width: 180px; }
.props tr { height: 21px; }
.props .more-props { height: 19px; }
.props th { height: 21px; padding-left: 2px; text-align: left; }
.props td { padding-left: 2px; }
.props td:first-child { padding-left: 20px; color: #0000e0; }
.props .private td:first-child { color: #000; }
.props .more-props td:first-child { padding-left: 2px; color: #000; }
.props input {
  appearance: none;
  display: block;
  width: 13px;
  height: 13px;
  margin: 2px 0 0;
  border: 1px solid #1c5180;
  background: linear-gradient(135deg, #dcdcd7, #fff);
}
.box {
  flex: none;
  width: 13px;
  height: 13px;
  border: 1px solid #b5b3aa;
  background: linear-gradient(135deg, #fff, #e0ded2);
  font: 13px/11px "Liberation Sans", sans-serif;
  color: #000;
}
.props .box { margin-right: 5px; }

.work-panel { display: flex; flex-direction: column; flex: 1; min-width: 0; min-height: 0; }
.worktools {
  display: flex;
  align-items: center;
  gap: 7px;
  flex: none;
  height: 27px;
  padding: 0 4px;
  border-bottom: 1px solid #c9c6b6;
  background: linear-gradient(#f8f7f1, #e6e3d3);
}
.worktools .sep { margin: 0 -1px; }
.gridbox {
  display: flex;
  flex-direction: column;
  flex: 399 1 0;
  min-height: 0;
  border: solid #7f9db9;
  border-width: 1px 2px;
  background: #fff;
}
.scroller { flex: 1; min-height: 0; overflow: hidden; }
.grid { width: 479px; margin: 0; }
.grid thead th { height: 21px; }
.grid tbody tr { height: 19px; }
.grid tbody .leaf { height: 20px; }
.grid tbody th { text-align: left; padding-left: 1px; background: linear-gradient(90deg, #fff, #efede2); }
.grid td { text-align: center; }
.grid .top td { background: #ccffcc; }
.grid .top td:nth-child(2) { background: #ace6c8; }
.grid .top th { background: #fcca80; color: #700020; font-weight: bold; }
.grid .group td { background: #ccffff; }
.cell { display: flex; align-items: center; height: 18px; padding-left: 3px; }
.leaf .cell { height: 19px; }
.cell > span, .cell > b { flex: 1; }
.cell b .k { font-weight: bold; }
.twig { width: 10px; height: 20px; fill: none; stroke: #b5b3aa; }
.twig.long { width: 32px; }
.hbar { display: flex; flex: none; gap: 2px; height: 17px; margin: 1px; background: #f6f5f0; }
.hbar button, .thumb { border: 1px solid #b0c2ee; border-radius: 2px; background: linear-gradient(#d5e0fd, #b7cbf8); }
.hbar button { width: 16px; }
.hbar button:last-child { margin-left: auto; }
.hbar svg { display: block; width: 8px; height: 8px; margin: auto; fill: none; stroke: #3f5d96; stroke-width: 2; }
.thumb { width: 63px; background: repeating-linear-gradient(90deg, #97aee3 0 1px, transparent 1px 2px) center / 8px 6px no-repeat, linear-gradient(#d5e0fd, #b7cbf8); }
.querybox { display: flex; flex-direction: column; flex: 213 1 0; min-height: 0; margin-top: 4px; border: solid #aca899; border-width: 1px 1px 0 0; }
.tabs { display: flex; flex: none; height: 21px; gap: 7px; }
.tabs button { height: 18px; }
.tabs .on { height: 21px; margin-right: -4px; padding: 2px 3px 0; border: 1px solid #8f8d80; border-bottom: 0; }
.results { flex: 1; min-height: 0; padding-left: 2px; border: solid #7f9db9; border-width: 1px 2px 0 1px; background: #fff; }
.list { width: 324px; }
.list thead th { height: 21px; }
.list tbody tr { height: 19px; }
.list tbody th { background: linear-gradient(#fff, #e9e7d9); }
.list tbody .on { background: #fcca80; color: #700020; }
.list td { padding-left: 2px; }

/* Browser window */
.browser { display: flex; flex-direction: column; min-width: 0; min-height: 0; overflow: hidden; padding-top: 9px; background: #f0f0f0; color: #444; }
.address { display: flex; flex: none; align-items: center; height: 27px; border: solid #bcbcbc; border-width: 1px 0; overflow: hidden; }
.address > button { display: flex; align-items: center; justify-content: center; flex: none; width: 31px; height: 100%; border-right: 1px solid #ddd; }
.address > button:first-child { justify-content: flex-start; width: 23px; }
.url { display: flex; flex: 1; align-items: center; gap: 5px; min-width: 0; height: 100%; padding: 0 8px 0 11px; overflow: hidden; background: #fff; color: #999; font: 13px/16px "Liberation Mono", monospace; }
.url span { flex: 1; white-space: nowrap; }
.url b { color: #000; font-weight: normal; }
.s14 { width: 14px; height: 14px; margin-left: 3px; }
.address > .drop { width: 25px; border-left: 1px solid #ccc; border-right: 1px solid #ccc; background: #fff; }
.hint { flex: 0 0 45px; align-self: stretch; padding: 4px 0 0 8px; overflow: hidden; background: #fff; color: #888; white-space: nowrap; }
.marks { display: flex; flex: none; align-items: center; height: 38px; gap: 9px; padding-right: 5px; overflow: hidden; }
.marks a { display: flex; align-items: center; gap: 3px; color: #333; text-decoration: none; white-space: nowrap; }
.marks .doc { gap: 0; margin-left: -3px; padding-right: 6px; }
.marks .chev { margin-left: -3px; }
.chev svg { display: block; width: 12px; height: 12px; }
.plugins { display: flex; align-items: center; gap: 5px; margin-left: auto; }
.plugins .grip { height: 14px; margin-right: 4px; }
.plugins .caret { width: 7px; height: 4px; }
.pagetabs { display: flex; flex: none; height: 28px; border-bottom: 1px solid #b5b5b5; }
.ptab { display: flex; align-items: center; gap: 5px; min-width: 0; height: 27px; padding: 0 7px 0 5px; border: solid #b5b5b5; border-width: 1px 1px 0; border-radius: 4px 4px 0 0; }
.ptab span { flex: 1; min-width: 0; overflow: hidden; white-space: nowrap; }
.ptab svg { width: 9px; height: 9px; color: #999; }
.ptab .s16 { width: 16px; height: 16px; }
.first { flex: 0 0 192px; padding-left: 0; border-left: 0; }
.active { flex: 0 0 224px; height: 28px; margin-left: 1px; background: #fff; color: #000; }
.active span { mask-image: linear-gradient(90deg, #000 90%, transparent); }
.plus { width: 25px; border-right: 1px solid #ccc; color: #666; font: 20px/20px "Liberation Sans", sans-serif; }
.page { display: flex; flex-direction: column; flex: 1; min-height: 0; padding-top: 2px; background: #fff; }
.band { flex: none; width: 415px; height: 13px; background: #0d62b3; }
.question { display: flex; align-items: center; justify-content: space-between; flex: none; height: 65px; margin-top: 50px; border: solid #e6e6e6; border-width: 1px 0; background: #f8f8f8; }
h1 { font-size: 18px; line-height: 24px; font-weight: normal; white-space: nowrap; color: #333; }
.question p { display: flex; flex: 0 0 75px; align-items: center; gap: 4px; overflow: hidden; font-size: 14px; white-space: nowrap; }
.question i { flex: none; width: 1px; height: 14px; background: #555; }
.question svg { width: 12px; height: 12px; }
.good { flex: none; margin: 20px 0 0 4px; color: #1763a6; font-size: 14px; line-height: 20px; text-decoration: none; }
.detail { display: flex; align-items: center; flex: none; margin-top: 16px; }
.detail p { display: flex; justify-content: flex-end; flex: 1; min-width: 0; overflow: hidden; font-size: 16px; line-height: 24px; white-space: nowrap; color: #333; }
.drawing { width: 199px; height: 344px; }
.crisp { shape-rendering: crispEdges; }
.dims { fill: #fff; font: 6px "Liberation Sans", sans-serif; }
.share { display: flex; flex: none; gap: 46px; margin: 38px 0 0 37px; }
.share button { width: 64px; height: 64px; padding-top: 9px; border-radius: 50%; display: flex; justify-content: center; flex: none; }
.share svg { width: 18px; height: 18px; }
.c-red { background: #ffd6dc; } .c-gold { background: #ffebc8; } .c-blue { background: #d3eeff; } .c-green { background: #dcf8e2; }

/* Red annotation arrows lie over both windows */
.marker { position: absolute; left: 0; top: 0; width: 100%; height: 100%; pointer-events: none; fill: none; stroke: #f00000; stroke-width: 3; }
.marker .head { fill: #ff0000; stroke-width: 1; }
```
